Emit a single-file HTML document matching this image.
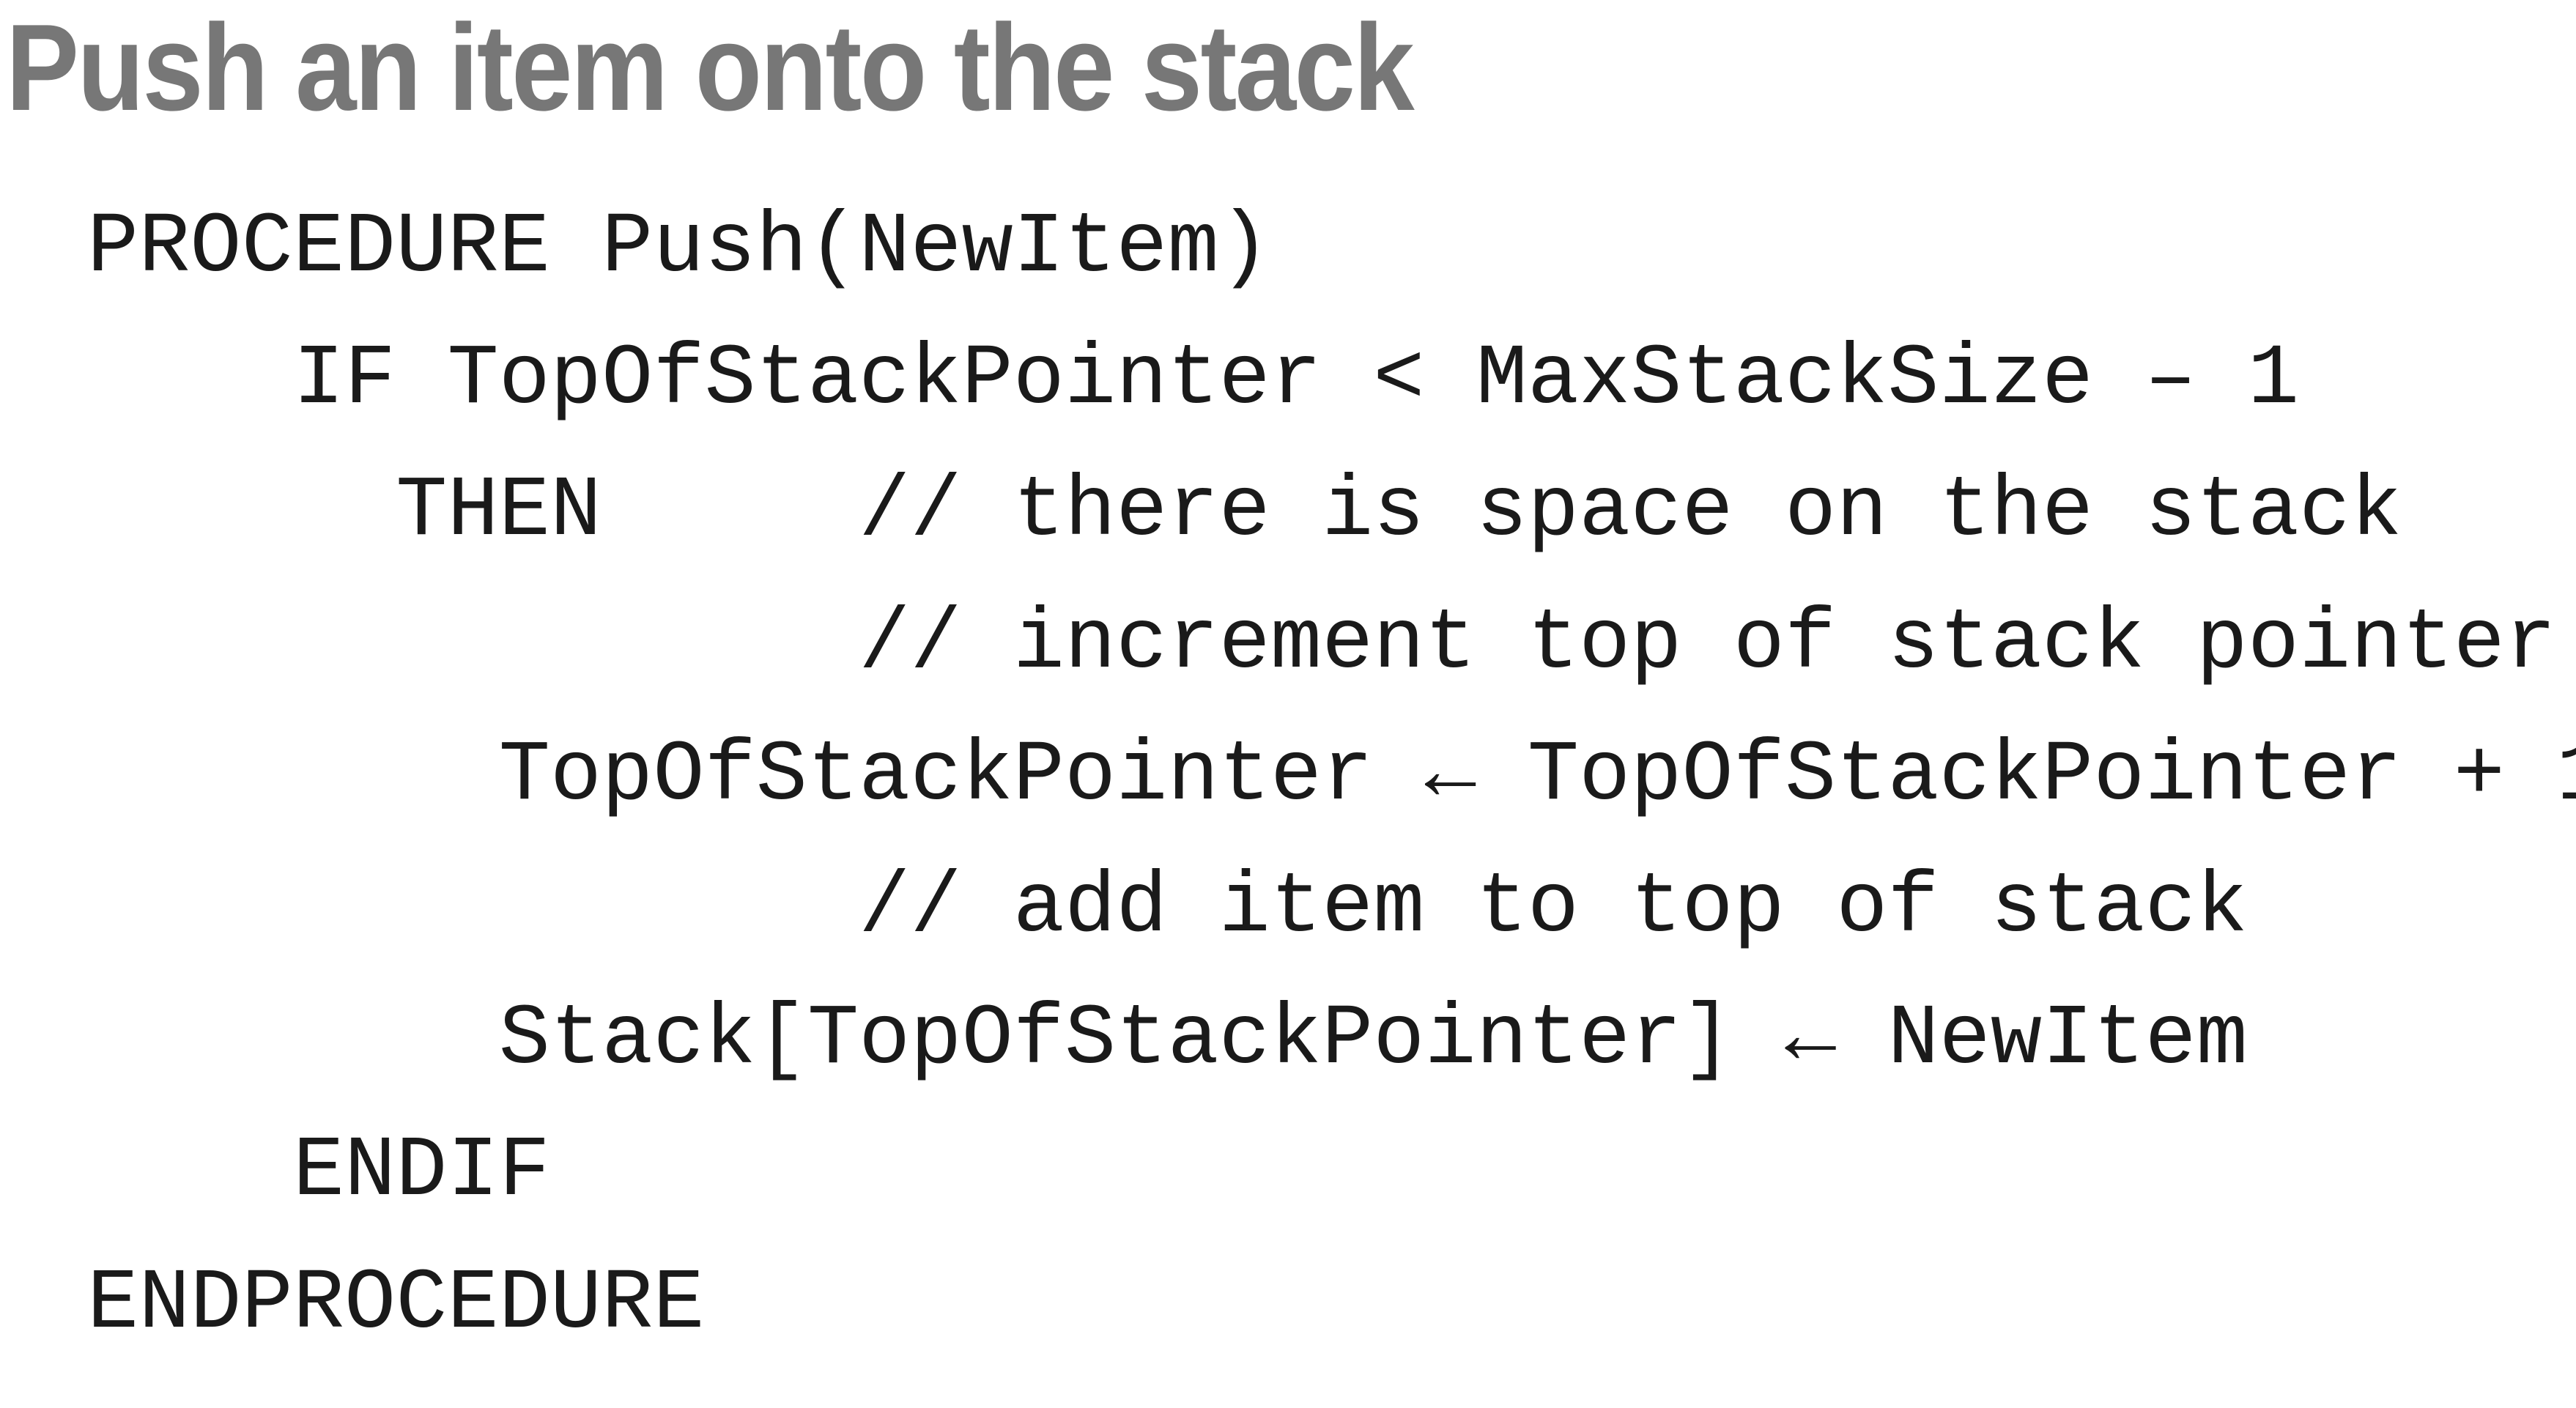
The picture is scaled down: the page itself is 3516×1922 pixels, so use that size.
<!DOCTYPE html>
<html><head><meta charset="utf-8"><style>
html,body{margin:0;padding:0;background:#fff;width:3516px;height:1922px;overflow:hidden;position:relative}
.t{position:absolute;left:8px;top:8px;font-family:"Liberation Sans",sans-serif;font-weight:bold;font-size:168px;color:#777;white-space:nowrap;transform-origin:0 0;transform:scaleX(0.893);letter-spacing:-3px;line-height:1}
.l{position:absolute;left:119px;font-family:"Liberation Mono","DejaVu Sans Mono",monospace;font-size:117px;color:#1a1a1a;white-space:pre;line-height:1}
</style></head><body>
<div class="t">Push an item onto the stack</div>
<div class="l" style="top:281px">PROCEDURE Push(NewItem)</div>
<div class="l" style="top:461px">    IF TopOfStackPointer &lt; MaxStackSize – 1</div>
<div class="l" style="top:641px">      THEN     // there is space on the stack</div>
<div class="l" style="top:822px">               // increment top of stack pointer</div>
<div class="l" style="top:1002px">        TopOfStackPointer ← TopOfStackPointer + 1</div>
<div class="l" style="top:1182px">               // add item to top of stack</div>
<div class="l" style="top:1362px">        Stack[TopOfStackPointer] ← NewItem</div>
<div class="l" style="top:1542px">    ENDIF</div>
<div class="l" style="top:1723px">ENDPROCEDURE</div>
</body></html>
